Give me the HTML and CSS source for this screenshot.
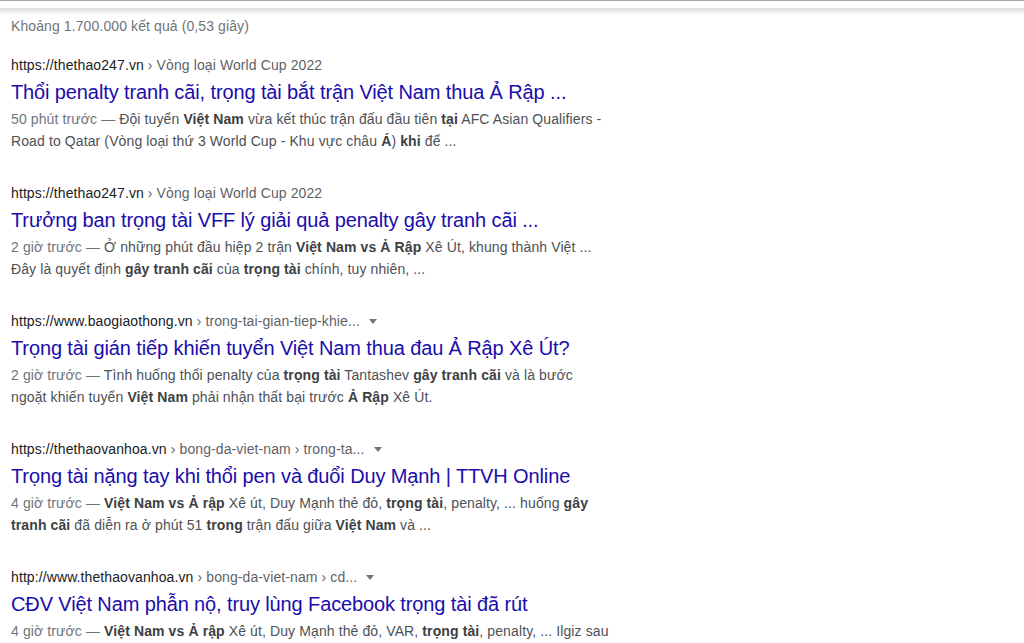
FILE: index.html
```html
<!DOCTYPE html>
<html lang="vi">
<head>
<meta charset="UTF-8">
<meta name="viewport" content="width=device-width, initial-scale=1.0">
<title>Kết quả tìm kiếm</title>
<link rel="stylesheet" href="styles.css">
</head>
<body>

<div class="topbar"></div>
<div class="shade"></div>

<div class="results">
  <div class="stats">Khoảng 1.700.000 kết quả (0,53 giây)</div>

  <div class="result">
    <div class="cite">https://thethao247.vn<span class="crumb"> › Vòng loại World Cup 2022</span></div>
    <a class="title" href="#">Thổi penalty tranh cãi, trọng tài bắt trận Việt Nam thua Ả Rập ...</a>
    <div class="snippet"><span class="date">50 phút trước — </span>Đội tuyển <b>Việt Nam</b> vừa kết thúc trận đấu đầu tiên <b>tại</b> AFC Asian Qualifiers -<br>Road to Qatar (Vòng loại thứ 3 World Cup - Khu vực châu <b>Á</b>) <b>khi</b> để ...</div>
  </div>

  <div class="result">
    <div class="cite">https://thethao247.vn<span class="crumb"> › Vòng loại World Cup 2022</span></div>
    <a class="title" href="#">Trưởng ban trọng tài VFF lý giải quả penalty gây tranh cãi ...</a>
    <div class="snippet"><span class="date">2 giờ trước — </span>Ở những phút đầu hiệp 2 trận <b>Việt Nam vs Ả Rập</b> Xê Út, khung thành Việt ...<br>Đây là quyết định <b>gây tranh cãi</b> của <b>trọng tài</b> chính, tuy nhiên, ...</div>
  </div>

  <div class="result">
    <div class="cite">https://www.baogiaothong.vn<span class="crumb"> › trong-tai-gian-tiep-khie...</span><span class="more"></span></div>
    <a class="title" href="#">Trọng tài gián tiếp khiến tuyển Việt Nam thua đau Ả Rập Xê Út?</a>
    <div class="snippet"><span class="date">2 giờ trước — </span>Tình huống thổi penalty của <b>trọng tài</b> Tantashev <b>gây tranh cãi</b> và là bước<br>ngoặt khiến tuyển <b>Việt Nam</b> phải nhận thất bại trước <b>Ả Rập</b> Xê Út.</div>
  </div>

  <div class="result">
    <div class="cite">https://thethaovanhoa.vn<span class="crumb"> › bong-da-viet-nam › trong-ta...</span><span class="more"></span></div>
    <a class="title" href="#">Trọng tài nặng tay khi thổi pen và đuổi Duy Mạnh | TTVH Online</a>
    <div class="snippet"><span class="date">4 giờ trước — </span><b>Việt Nam vs Ả rập</b> Xê út, Duy Mạnh thẻ đỏ, <b>trọng tài</b>, penalty, ... huống <b>gây</b><br><b>tranh cãi</b> đã diễn ra ở phút 51 <b>trong</b> trận đấu giữa <b>Việt Nam</b> và ...</div>
  </div>

  <div class="result">
    <div class="cite">http://www.thethaovanhoa.vn<span class="crumb"> › bong-da-viet-nam › cd...</span><span class="more"></span></div>
    <a class="title" href="#">CĐV Việt Nam phẫn nộ, truy lùng Facebook trọng tài đã rút</a>
    <div class="snippet"><span class="date">4 giờ trước — </span><b>Việt Nam vs Ả rập</b> Xê út, Duy Mạnh thẻ đỏ, VAR, <b>trọng tài</b>, penalty, ... Ilgiz sau</div>
  </div>
</div>

</body>
</html>
```

FILE: styles.css
```css
body {
  margin: 0;
  font-family: "Liberation Sans", Arial, sans-serif;
  background: #fff;
  overflow: hidden;
}
.topbar {
  height: 7px;
  border-top: 1px solid #a8a8a8;
}
.shade {
  height: 7px;
  background: linear-gradient(#dedede, #fff);
}
.results {
  padding: 1px 0 0 11px;
  width: 640px;
}
.stats {
  font-size: 14px;
  line-height: 20px;
  color: #70757a;
  margin-bottom: 18px;
  letter-spacing: 0.1px;
}
.result {
  margin-bottom: 30px;
}
.cite {
  font-size: 14px;
  line-height: 22px;
  color: #202124;
  letter-spacing: 0.1px;
  white-space: nowrap;
}
.crumb {
  color: #5f6368;
}
.more {
  display: inline-block;
  margin-left: 9px;
  border-left: 4px solid transparent;
  border-right: 4px solid transparent;
  border-top: 5px solid #70757a;
  vertical-align: 2px;
}
.title {
  display: block;
  margin-top: 2px;
  font-size: 20px;
  line-height: 28px;
  color: #1a0dab;
  text-decoration: none;
  white-space: nowrap;
  letter-spacing: -0.12px;
}
.snippet {
  margin-top: 2px;
  font-size: 14px;
  line-height: 22px;
  color: #4d5156;
  letter-spacing: 0.11px;
  white-space: nowrap;
}
.snippet b {
  color: #3c4043;
}
.date {
  color: #70757a;
}
```
